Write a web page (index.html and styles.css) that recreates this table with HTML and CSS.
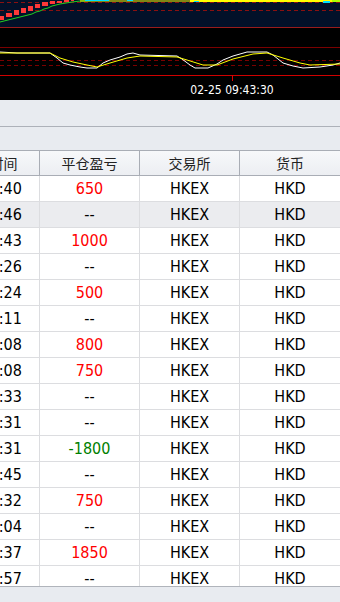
FILE: index.html
```html
<!DOCTYPE html>
<html lang="zh-CN">
<head>
<meta charset="utf-8">
<title>平仓记录</title>
<link rel="stylesheet" href="styles.css">
</head>
<body>
<div class="chart">
  <svg class="chart-svg" width="340" height="100" viewBox="0 0 340 100" xmlns="http://www.w3.org/2000/svg">
    <rect x="0" y="0" width="340" height="27" fill="#031129"/>
    <rect x="0" y="27" width="340" height="73" fill="#000"/>
    <g shape-rendering="crispEdges">
      <line x1="0" y1="2.5" x2="340" y2="2.5" stroke="#8a1010" stroke-dasharray="4 3"/>
      <line x1="0" y1="10.5" x2="340" y2="10.5" stroke="#8a1010" stroke-dasharray="4 3"/>
      <line x1="0" y1="27.5" x2="340" y2="27.5" stroke="#9a1c1c"/>
      <line x1="0" y1="47.5" x2="340" y2="47.5" stroke="#7a0000"/>
      <line x1="0" y1="60.5" x2="340" y2="60.5" stroke="#7a0000" stroke-dasharray="4 3"/>
      <line x1="0" y1="65.5" x2="340" y2="65.5" stroke="#7a0000" stroke-dasharray="4 3"/>
      <line x1="0" y1="75.5" x2="340" y2="75.5" stroke="#d00000"/>
      <line x1="232.5" y1="75" x2="232.5" y2="81" stroke="#e00000"/>
    </g>
    <g fill="#ff3838" shape-rendering="crispEdges">
      <rect x="0" y="16" width="4" height="4"/>
      <rect x="6" y="13" width="6" height="4"/>
      <rect x="14" y="10" width="5" height="5"/>
      <rect x="21" y="8" width="5" height="5"/>
      <rect x="28" y="6" width="5" height="5"/>
      <rect x="35" y="4" width="5" height="4"/>
      <rect x="42" y="2" width="6" height="4"/>
      <rect x="50" y="1" width="5" height="3"/>
      <rect x="57" y="1" width="5" height="2"/>
      <rect x="64" y="0" width="5" height="2"/>
      <rect x="71" y="0" width="3" height="1"/>
    </g>
    <polyline fill="none" stroke="#22d022" stroke-width="1" points="0,22 4,21 8,20 12,19 16,18 20,17 24,16 28,15 32,14 36,12 40,11 44,9 48,8 52,6 56,5 60,4 66,3 72,2 80,1 110,0"/>
    <polyline fill="none" stroke="#ffff00" stroke-width="1" points="80,1 340,1"/>
    <rect x="190" y="0" width="150" height="2" fill="#ffff00"/>
    <rect x="194" y="1" width="5" height="1" fill="#00e0ff"/>
    <rect x="85" y="0" width="24" height="1" fill="#00e0ff"/>
    <rect x="127" y="0" width="6" height="1" fill="#00e0ff"/>
    <rect x="323" y="1" width="7" height="2" fill="#00e0ff"/>
    <rect x="332" y="0" width="8" height="2" fill="#b0ff00"/>
    <polyline fill="none" stroke="#ffffff" stroke-width="1" stroke-linejoin="round" points="0,52 17,53 50,53 57,58 63,63 70,65 80,67 87,68 97,68 103,63 110,60 120,57 127,54 133,53 140,55 177,56 182,59 190,65 195,68 208,68 217,64 223,60 233,56 247,52 267,52 273,55 283,63 293,66 303,68 320,67 333,65 340,63"/>
    <polyline fill="none" stroke="#ffff00" stroke-width="1" stroke-linejoin="round" points="0,53 50,53 60,58 73,62 87,65 97,67 110,63 127,58 140,56 177,57 187,60 203,65 217,65 233,59 253,54 267,53 283,58 300,63 310,65 340,64"/>
    <text class="time-label" x="232" y="94" text-anchor="middle">02-25 09:43:30</text>
  </svg>
</div>
<div class="toolbar"></div>
<div class="subbar"></div>
<div class="table-wrap">
  <div class="grid">
    <div class="row head">
      <div class="cell">成交时间</div>
      <div class="cell">平仓盈亏</div>
      <div class="cell">交易所</div>
      <div class="cell">货币</div>
    </div>
    <div class="row"><div class="cell">09:43:40</div><div class="cell up">650</div><div class="cell">HKEX</div><div class="cell">HKD</div></div>
    <div class="row hover"><div class="cell">09:41:46</div><div class="cell">--</div><div class="cell">HKEX</div><div class="cell">HKD</div></div>
    <div class="row"><div class="cell">09:40:43</div><div class="cell up">1000</div><div class="cell">HKEX</div><div class="cell">HKD</div></div>
    <div class="row"><div class="cell">09:38:26</div><div class="cell">--</div><div class="cell">HKEX</div><div class="cell">HKD</div></div>
    <div class="row"><div class="cell">09:36:24</div><div class="cell up">500</div><div class="cell">HKEX</div><div class="cell">HKD</div></div>
    <div class="row"><div class="cell">09:35:11</div><div class="cell">--</div><div class="cell">HKEX</div><div class="cell">HKD</div></div>
    <div class="row"><div class="cell">09:33:08</div><div class="cell up">800</div><div class="cell">HKEX</div><div class="cell">HKD</div></div>
    <div class="row"><div class="cell">09:32:08</div><div class="cell up">750</div><div class="cell">HKEX</div><div class="cell">HKD</div></div>
    <div class="row"><div class="cell">09:30:33</div><div class="cell">--</div><div class="cell">HKEX</div><div class="cell">HKD</div></div>
    <div class="row"><div class="cell">09:28:31</div><div class="cell">--</div><div class="cell">HKEX</div><div class="cell">HKD</div></div>
    <div class="row"><div class="cell">09:27:31</div><div class="cell down">-1800</div><div class="cell">HKEX</div><div class="cell">HKD</div></div>
    <div class="row"><div class="cell">09:25:45</div><div class="cell">--</div><div class="cell">HKEX</div><div class="cell">HKD</div></div>
    <div class="row"><div class="cell">09:24:32</div><div class="cell up">750</div><div class="cell">HKEX</div><div class="cell">HKD</div></div>
    <div class="row"><div class="cell">09:22:04</div><div class="cell">--</div><div class="cell">HKEX</div><div class="cell">HKD</div></div>
    <div class="row"><div class="cell">09:20:37</div><div class="cell up">1850</div><div class="cell">HKEX</div><div class="cell">HKD</div></div>
    <div class="row"><div class="cell">09:18:57</div><div class="cell">--</div><div class="cell">HKEX</div><div class="cell">HKD</div></div>
  </div>
</div>
<div class="footer"></div>
</body>
</html>
```
FILE: styles.css
```css
html, body {
  margin: 0;
  padding: 0;
  background: #e8ebf0;
}
body {
  width: 340px;
  height: 602px;
  overflow: hidden;
  font-family: "DejaVu Sans Condensed", "DejaVu Sans", "Noto Sans CJK SC", sans-serif;
}
.chart {
  height: 100px;
  background: #000;
}
.chart-svg {
  display: block;
}
.time-label {
  fill: #ffffff;
  font-family: "DejaVu Sans Condensed", "DejaVu Sans", sans-serif;
  font-size: 12px;
}
.toolbar {
  height: 26px;
  background: #e8ebf0;
  border-bottom: 1px solid #adb1b9;
}
.subbar {
  height: 23px;
  background: #e8ebf0;
}
.table-wrap {
  height: 436px;
  overflow: hidden;
  background: #fff;
}
.grid {
  margin-left: -60px;
  width: 400px;
}
.row {
  display: grid;
  grid-template-columns: 100px 100px 100px 100px;
  height: 26px;
  box-sizing: border-box;
  border-bottom: 1px solid #dcdde0;
  background: #fff;
}
.row.hover {
  background: #ebecef;
}
.cell {
  box-sizing: border-box;
  border-right: 1px solid #dcdde0;
  display: flex;
  align-items: center;
  justify-content: center;
  font-size: 16px;
  color: #000;
  white-space: nowrap;
  overflow: hidden;
}
.cell:last-child {
  border-right: none;
}
.row.head {
  height: 26px;
  border-top: 1px solid #a9adb5;
  border-bottom: 1px solid #a9adb5;
  background: linear-gradient(#f7f8fa, #eceef2);
}
.row.head .cell {
  border-right-color: #a9adb5;
  font-family: "Noto Sans CJK SC", sans-serif;
  font-size: 14px;
  color: #222;
}
.row.head .cell:last-child {
  border-right: none;
}
.up {
  color: #ff0000;
}
.down {
  color: #008000;
}
.footer {
  height: 15px;
  border-top: 1px solid #b0b4bb;
  background: #e8ebf0;
}
```
